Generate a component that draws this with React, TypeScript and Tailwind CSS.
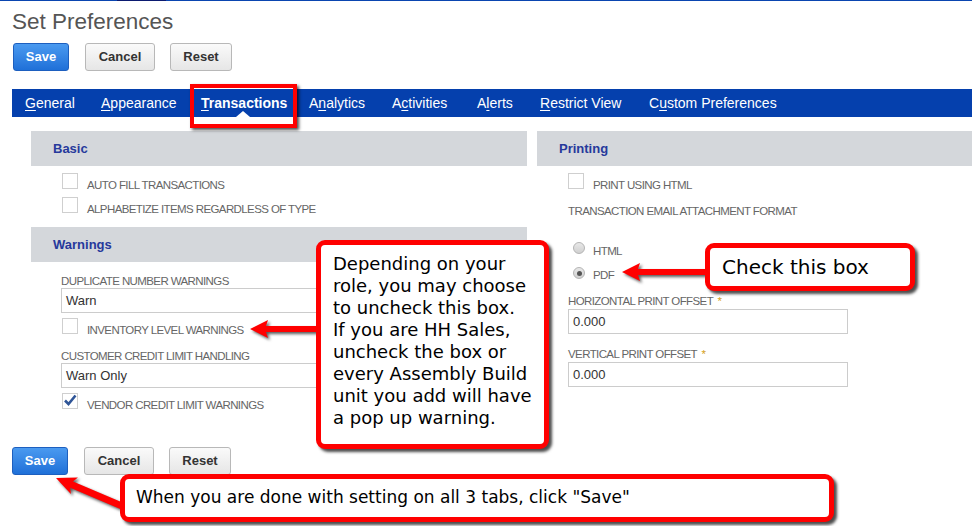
import type { ReactNode } from 'react'

const labelCls = "text-[11.5px] tracking-[-0.6px] text-[#666] uppercase leading-[12px]"

function Checkbox({ checked }: { checked?: boolean }) {
  return (
    <div className="relative w-4 h-4 border border-[#cfcfcf] bg-white shrink-0">
      {checked && (
        <svg viewBox="0 0 16 16" className="absolute -left-px -top-[2px] w-[16px] h-[16px]">
          <path d="M3 8.5 L6.5 12 L13.5 3.5" fill="none" stroke="#2f5597" strokeWidth="2.6" />
        </svg>
      )}
    </div>
  )
}

function CheckRow({ label, checked, className = "" }: { label: string; checked?: boolean; className?: string }) {
  return (
    <div className={`flex items-center h-4 ${className}`}>
      <Checkbox checked={checked} />
      <span className={`${labelCls} ml-[9px] relative top-[4px]`}>{label}</span>
    </div>
  )
}

function Radio({ checked }: { checked?: boolean }) {
  return (
    <div className="w-[12px] h-[12px] rounded-full border border-[#b4b4b4] bg-gradient-to-b from-[#e8e8e8] to-[#d0d0d0] flex items-center justify-center">
      {checked && <div className="w-[5px] h-[5px] rounded-full bg-[#555]" />}
    </div>
  )
}

function PanelHeader({ children }: { children: ReactNode }) {
  return (
    <div className="h-[35px] bg-[#d4d7db] flex items-center pl-[22px] pt-px text-[13px] font-bold text-[#26399c]">
      {children}
    </div>
  )
}

function Field({ value, className = "" }: { value: string; className?: string }) {
  return (
    <div className={`h-[25px] border border-[#cccccc] bg-white flex items-center px-[4px] text-[13px] text-[#333] ${className}`}>
      {value}
    </div>
  )
}

function ButtonRow() {
  return (
    <div className="flex items-center">
      <button className="w-[56px] h-[28px] rounded-[3px] border border-[#1d5fbf] bg-gradient-to-b from-[#4a9af0] to-[#1f70d8] text-white text-[13px] font-bold">
        Save
      </button>
      <button className="ml-[16px] w-[70px] h-[28px] rounded-[3px] border border-[#b8b8b8] bg-gradient-to-b from-[#fafafa] to-[#e6e6e6] text-[#333] text-[13px] font-bold">
        Cancel
      </button>
      <button className="ml-[15px] w-[62px] h-[28px] rounded-[3px] border border-[#b8b8b8] bg-gradient-to-b from-[#fafafa] to-[#e6e6e6] text-[#333] text-[13px] font-bold">
        Reset
      </button>
    </div>
  )
}

const tabs: { pre: string; key: string; post: string; w: string; active?: boolean }[] = [
  { pre: "", key: "G", post: "eneral", w: "w-[76px]" },
  { pre: "", key: "A", post: "ppearance", w: "w-[100px]" },
  { pre: "", key: "T", post: "ransactions", w: "w-[108px]", active: true },
  { pre: "A", key: "n", post: "alytics", w: "w-[83px]" },
  { pre: "A", key: "c", post: "tivities", w: "w-[85px]" },
  { pre: "A", key: "l", post: "erts", w: "w-[63px]" },
  { pre: "", key: "R", post: "estrict View", w: "w-[109px]" },
  { pre: "C", key: "u", post: "stom Preferences", w: "" },
]

export default function App() {
  return (
    <div className="relative w-[972px] h-[526px] overflow-hidden bg-white font-['Liberation_Sans',Arial,sans-serif]">
      {/* top strip */}
      <div className="flex h-px">
        <div className="w-[117px] bg-[#0a45b0]" />
        <div className="w-[49px] bg-[#0b1a70]" />
        <div className="flex-1 bg-[#0a45b0]" />
      </div>

      <h1 className="pl-3 pt-[7px] text-[22.5px] leading-[28px] text-[#555]">Set Preferences</h1>

      <div className="mt-[7px] pl-[13px]">
        <ButtonRow />
      </div>

      <div className="relative ml-3 mt-[18px] h-[28px] bg-[#0540ad] flex items-center pl-[13px] text-[14px] text-white">
        {tabs.map(t => (
          <div key={t.key + t.post} className={`${t.w} shrink-0 whitespace-nowrap ${t.active ? "font-bold" : ""}`}>
            {t.pre}<span className="underline underline-offset-2">{t.key}</span>{t.post}
          </div>
        ))}
        <div className="absolute left-[224px] bottom-0 w-0 h-0 border-x-[7px] border-x-transparent border-b-[6px] border-b-white" />
      </div>

      <div className="mt-[14px] flex items-start">
        {/* left column */}
        <div className="ml-[31px] w-[496px]">
          <PanelHeader>Basic</PanelHeader>
          <div className="pl-[31px]">
            <CheckRow label="Auto Fill Transactions" className="mt-[7px]" />
            <CheckRow label="Alphabetize Items Regardless of Type" className="mt-[8px]" />
          </div>
          <div className="mt-[14px]">
            <PanelHeader>Warnings</PanelHeader>
          </div>
          <div className="pl-[30px]">
            <div className={`${labelCls} mt-[13px]`}>Duplicate Number Warnings</div>
            <Field value="Warn" className="mt-[1px] w-[290px]" />
            <div className="pl-px">
              <CheckRow label="Inventory Level Warnings" className="mt-[5px]" />
            </div>
            <div className={`${labelCls} mt-[16px]`}>Customer Credit Limit Handling</div>
            <Field value="Warn Only" className="mt-[1px] w-[290px]" />
            <div className="pl-px">
              <CheckRow label="Vendor Credit Limit Warnings" checked className="mt-[5px]" />
            </div>
          </div>
        </div>

        {/* right column */}
        <div className="ml-[10px] flex-1">
          <PanelHeader>Printing</PanelHeader>
          <div className="pl-[31px]">
            <CheckRow label="Print Using HTML" className="mt-[7px]" />
            <div className={`${labelCls} mt-[16px]`}>Transaction Email Attachment Format</div>
            <div className="mt-[24px] flex items-center pl-[5px] h-[14px]">
              <Radio />
              <span className={`${labelCls} ml-[8px] pt-[5px]`}>HTML</span>
            </div>
            <div className="mt-[11px] flex items-center pl-[5px] h-[14px]">
              <Radio checked />
              <span className={`${labelCls} ml-[8px] pt-[3px]`}>PDF</span>
            </div>
            <div className={`${labelCls} mt-[15px]`}>
              Horizontal Print Offset <span className="text-[#d4a21c] ml-[2px]">*</span>
            </div>
            <Field value="0.000" className="mt-[2px] w-[280px]" />
            <div className={`${labelCls} mt-[14px]`}>
              Vertical Print Offset <span className="text-[#d4a21c] ml-[2px]">*</span>
            </div>
            <Field value="0.000" className="mt-[2px] w-[280px]" />
          </div>
        </div>
      </div>

      <div className="mt-[38px] pl-3">
        <ButtonRow />
      </div>

      {/* annotation overlays */}
      <div className="absolute left-[190px] top-[84px] w-[107px] h-[44px] border-[4px] border-[#ff0000] shadow-[2px_2px_3px_rgba(0,0,0,0.7)]" />

      <svg className="absolute inset-0 w-[972px] h-[526px] pointer-events-none drop-shadow-[2px_2px_1.5px_rgba(0,0,0,0.65)]" viewBox="0 0 972 526">
        <polygon fill="#ff0000" points="250,329 268,320 266,326 320,326 320,332 266,332 268,338" />
        <polygon fill="#ff0000" points="622,272 640,263 638,269 709,269 709,275 638,275 640,281" />
        <g transform="translate(56,478) rotate(23)">
          <polygon fill="#ff0000" points="0,0 20,-9 17,-3.5 72,-3.5 72,3.5 17,3.5 20,9" />
        </g>
      </svg>

      <div className="absolute left-[316px] top-[240px] w-[233px] h-[209px] border-[5px] border-[#ff0000] rounded-[9px] bg-white shadow-[3px_3px_3px_rgba(0,0,0,0.7)] pl-[12px] pt-[8px] text-[18px] leading-[22px] whitespace-nowrap text-black font-['DejaVu_Sans',Verdana,sans-serif]">
        Depending on your<br />
        role, you may choose<br />
        to uncheck this box.<br />
        If you are HH Sales,<br />
        uncheck the box or<br />
        every Assembly Build<br />
        unit you add will have<br />
        a pop up warning.
      </div>

      <div className="absolute left-[705px] top-[243px] w-[210px] h-[48px] border-[5px] border-[#ff0000] rounded-[9px] bg-white shadow-[3px_3px_3px_rgba(0,0,0,0.7)] pl-[12px] flex items-center text-[20px] text-black font-['DejaVu_Sans',Verdana,sans-serif]">
        Check this box
      </div>

      <div className="absolute left-[120px] top-[474px] w-[714px] h-[48px] border-[5px] border-[#ff0000] rounded-[9px] bg-white shadow-[3px_3px_3px_rgba(0,0,0,0.7)] pl-[11px] flex items-center text-[17px] text-black font-['DejaVu_Sans',Verdana,sans-serif]">
        When you are done with setting on all 3 tabs, click "Save"
      </div>
    </div>
  )
}
